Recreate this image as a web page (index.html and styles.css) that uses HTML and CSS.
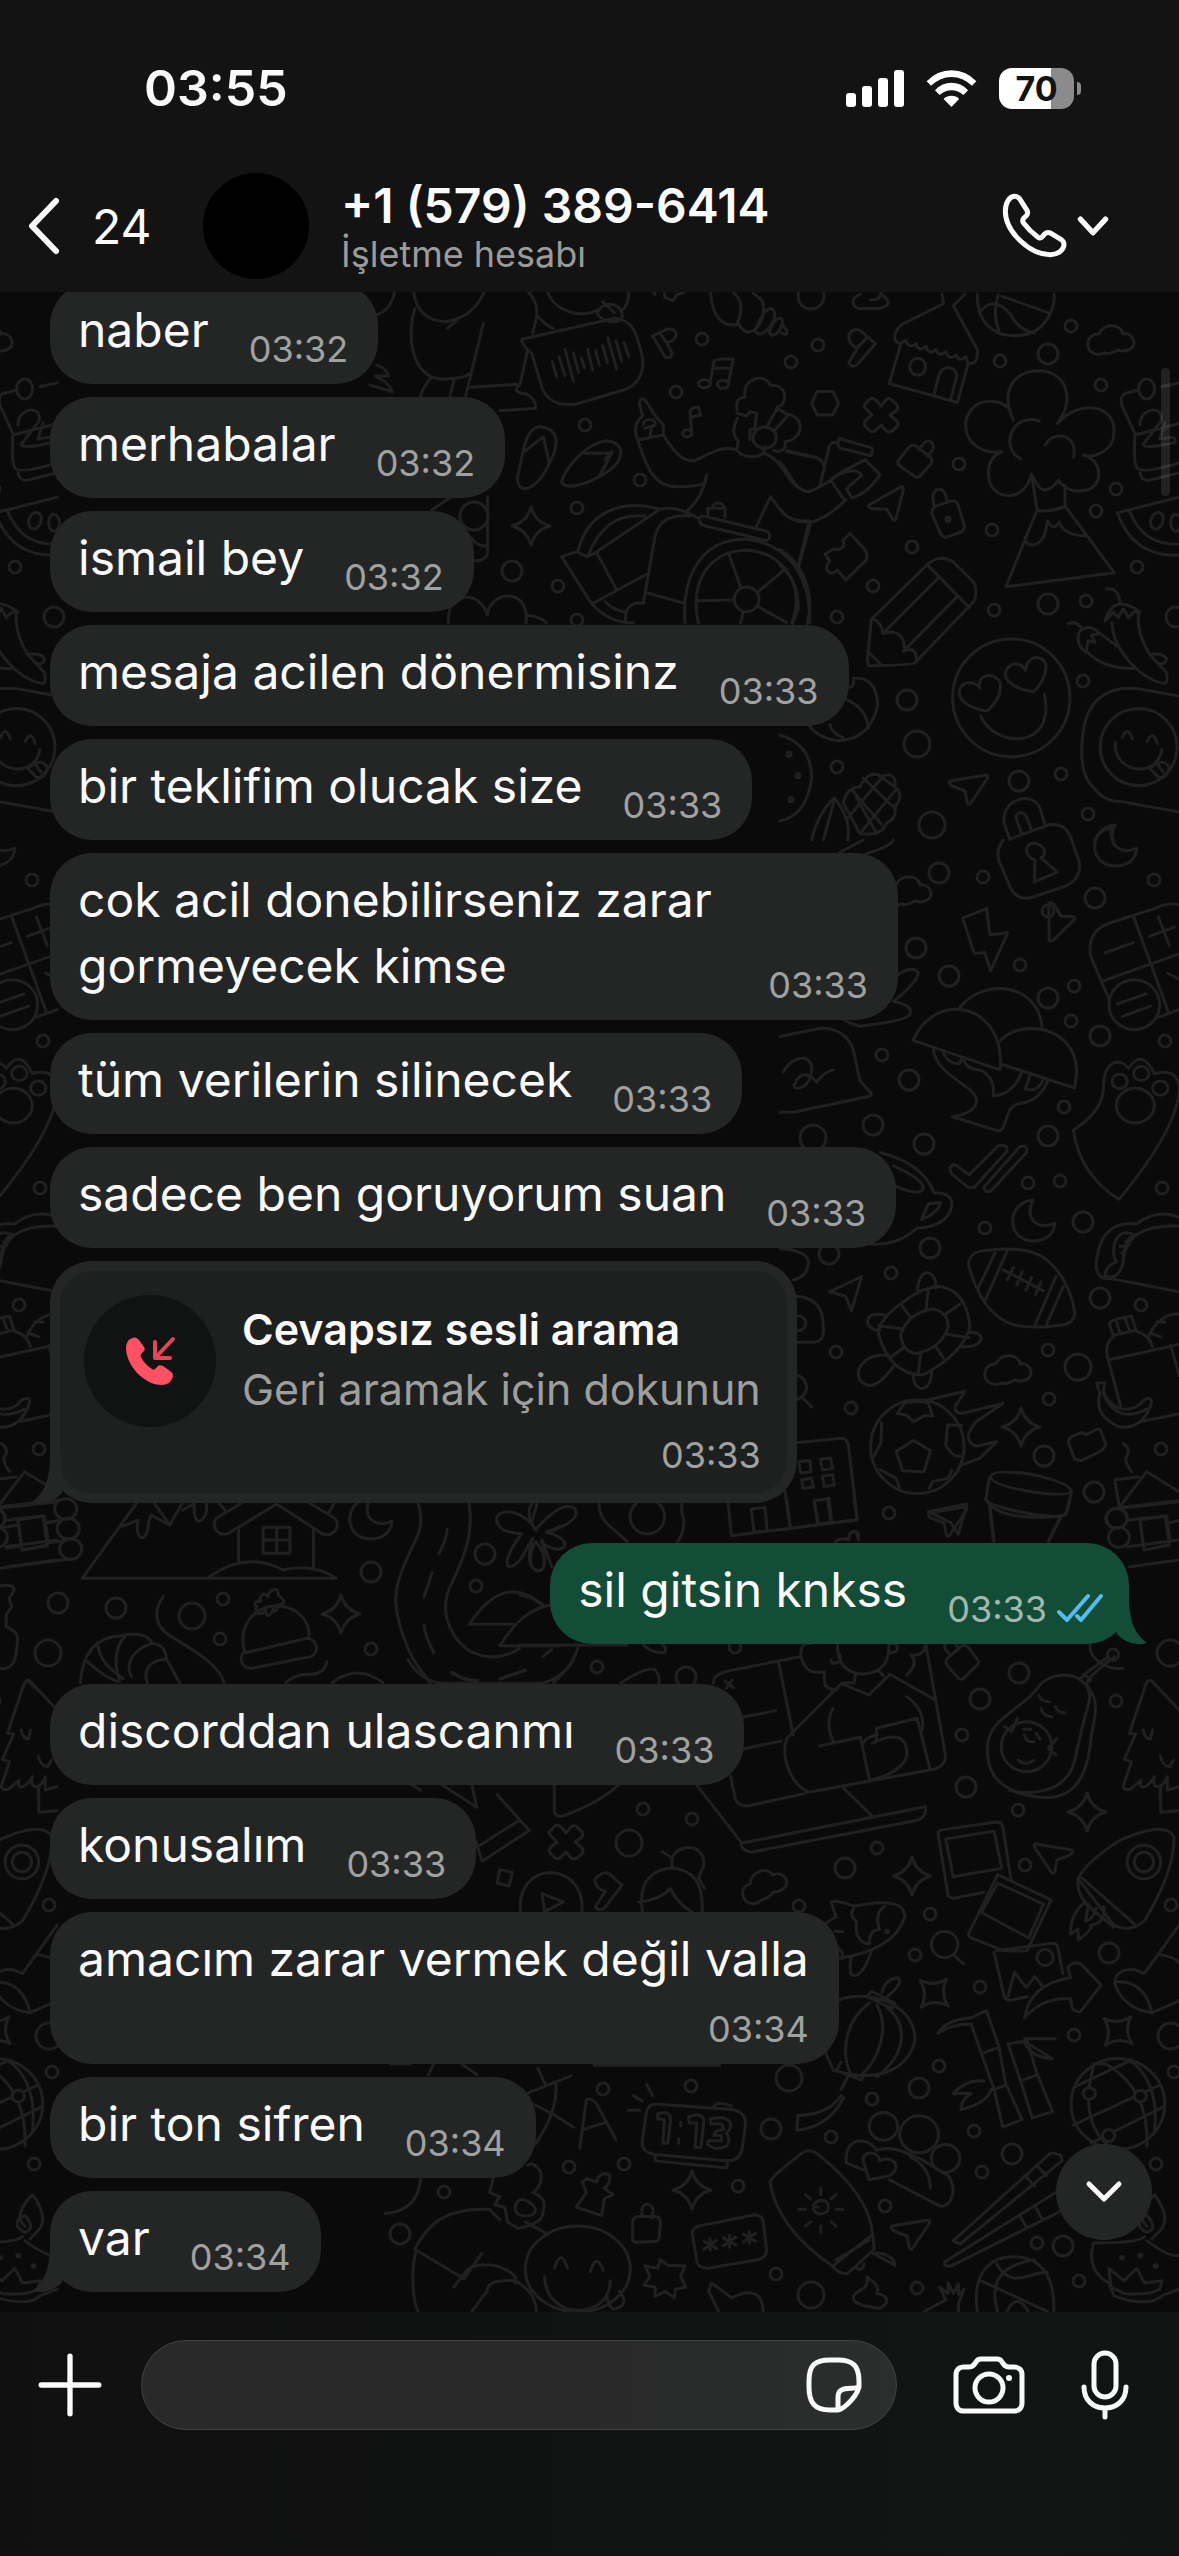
FILE: index.html
```html
<!DOCTYPE html>
<html lang="tr">
<head>
<meta charset="utf-8">
<meta name="viewport" content="width=device-width, initial-scale=1">
<title>+1 (579) 389-6414</title>
<link rel="stylesheet" href="styles.css">
</head>
<body>
<header class="top">
  <div class="status">
    <time class="clock">03:55</time>
    <div class="status-icons">
      <svg class="signal" viewBox="0 0 58 38" aria-hidden="true"><rect x="0" y="24" width="10" height="14" rx="3"/><rect x="16" y="17" width="10" height="21" rx="3"/><rect x="32" y="9" width="10" height="29" rx="3"/><rect x="48" y="1" width="10" height="37" rx="3"/></svg>
      <svg class="wifi" viewBox="438 84 154 116" aria-hidden="true"><path d="M440 120Q472 87 515 87T590 120L577 134Q549 107 515 107T453 134Z"/><path d="M465 147Q487 125 515 125T565 147L551 162Q535 147 515 147T479 162Z"/><path d="M491 174Q501 164 515 164T538 174L515 198Z"/></svg>
      <div class="battery"><span class="level">70</span></div>
    </div>
  </div>
  <div class="contact">
    <button class="back" type="button" aria-label="Geri">
      <svg class="back-icon" viewBox="0 0 36 60"><path d="M30 5 6 30 30 55"/></svg>
      <span>24</span>
    </button>
    <div class="avatar"></div>
    <div class="who">
      <h1>+1 (579) 389-6414</h1>
      <p>İşletme hesabı</p>
    </div>
    <button class="call" type="button" aria-label="Ara">
      <svg class="phone" viewBox="660 460 210 210"><path d="M705 476C688 476 676 495 676 521C676 582 750 652 812 651C835 650 852 637 852 620C852 614 849 610 844 606L813 587C805 583 799 584 794 589L787 597C783 602 778 602 773 598C757 586 743 572 730 555C727 550 727 547 731 542L739 534C744 529 744 524 741 518L722 488C718 481 713 476 705 476Z"/></svg>
      <svg class="down" viewBox="0 0 30 20"><path d="M3 3 15 16 27 3"/></svg>
    </button>
  </div>
</header>

<main class="chat">
  <svg class="wallpaper" viewBox="0 292 1179 2020" preserveAspectRatio="xMidYMin slice" aria-hidden="true">
    <defs>
      <circle id="s" r="6"/><circle id="m" r="10"/><circle id="l" r="13"/>
      <path id="star" d="M0-19Q4-4 19 0Q4 4 0 19Q-4 4-19 0Q-4-4 0-19Z"/>
      <path id="plane" d="M-19-6 17-12Q20-12 18-8L1 17Q-2 18-2 14L-4 4-17-1Q-21-4-19-6Z"/>
      <path id="cloud" d="M-18 12C-27 8-24-8-12-7C-8-18 10-18 12-7C24-9 27 7 17 9Q12 11 7 9Q-2 14-7 12Q-13 15-18 12Z"/>
      <path id="moon" d="M-1-20C-10 0 5 11 21 3C20 15 11 21-1 21C-29 20-27-18-1-20Z"/>
      <path id="cross" d="M-4-14 0-9 5-15Q8-18 11-15L16-10Q18-7 15-4L9 0 16 6Q18 9 16 12L11 16Q8 18 5 16L0 10-6 16Q-9 18-12 15L-16 11Q-18 8-15 5L-9 0-16-7Q-18-10-15-12L-11-16Q-8-18-4-14Z"/>
      <g id="bag"><path d="M-17 0-6-14Q-3-17 1-15L15-4Q18-1 16 3L6 14Q3 18-1 15L-15 5Q-18 3-17 0Z"/><path d="M4-12 9-18C15-24 22-15 16-9L12-5"/></g>
    </defs>
    <g id="doodles">
      <g>
        <use href="#l" x="811" y="296"/><use href="#m" x="1048" y="354"/><use href="#m" x="907" y="700"/><use href="#l" x="917" y="744"/><use href="#m" x="1019" y="781"/><use href="#l" x="932" y="825"/><use href="#m" x="1048" y="604"/><use href="#s" x="818" y="345"/><use href="#s" x="791" y="362"/><use href="#s" x="1071" y="326"/><use href="#s" x="1000" y="361"/><use href="#s" x="1101" y="385"/><use href="#s" x="959" y="464"/><use href="#s" x="1116" y="489"/><use href="#s" x="1096" y="511"/><use href="#s" x="992" y="530"/><use href="#s" x="912" y="547"/><use href="#s" x="1137" y="567"/><use href="#s" x="873" y="586"/><use href="#s" x="837" y="617"/><use href="#s" x="994" y="610"/><use href="#s" x="1086" y="601"/><use href="#s" x="1083" y="681"/><use href="#s" x="837" y="767"/><use href="#s" x="1061" y="774"/><use href="#s" x="1088" y="814"/><use href="#m" x="1176" y="617"/>
        <use href="#m" x="939" y="873"/><use href="#m" x="1095" y="898"/><use href="#m" x="916" y="948"/><use href="#m" x="949" y="976"/><use href="#m" x="1048" y="998"/><use href="#m" x="1100" y="1036"/><use href="#m" x="909" y="1080"/><use href="#m" x="873" y="1125"/><use href="#m" x="924" y="1144"/><use href="#m" x="1048" y="1136"/><use href="#m" x="1083" y="1222"/><use href="#m" x="930" y="1248"/><use href="#m" x="829" y="1254"/><use href="#m" x="1100" y="1298"/><use href="#l" x="1078" y="1367"/><use href="#m" x="1044" y="1456"/><use href="#m" x="1094" y="1492"/><use href="#l" x="813" y="1138"/>
        <use href="#s" x="983" y="877"/><use href="#s" x="1048" y="911"/><use href="#s" x="1154" y="880"/><use href="#s" x="1020" y="965"/><use href="#s" x="1074" y="986"/><use href="#s" x="1071" y="1021"/><use href="#s" x="1165" y="1041"/><use href="#s" x="882" y="1055"/><use href="#s" x="1064" y="1107"/><use href="#s" x="1028" y="1183"/><use href="#s" x="1060" y="1181"/><use href="#s" x="1162" y="1188"/><use href="#s" x="985" y="1228"/><use href="#s" x="891" y="1273"/><use href="#s" x="1141" y="1305"/><use href="#s" x="836" y="1352"/><use href="#s" x="1048" y="1350"/><use href="#s" x="1049" y="1399"/><use href="#s" x="851" y="1408"/><use href="#s" x="1161" y="1449"/><use href="#s" x="889" y="1513"/>
        <use href="#s" x="597" y="1667"/><use href="#s" x="735" y="1647"/><use href="#s" x="962" y="1735"/><use href="#s" x="1116" y="1701"/><use href="#m" x="686" y="1677"/><use href="#m" x="1019" y="1673"/><use href="#m" x="980" y="1699"/><use href="#m" x="966" y="1787"/><use href="#l" x="1170" y="1653"/>
        <use href="#s" x="643" y="1809"/><use href="#s" x="692" y="1819"/><use href="#s" x="1018" y="1810"/><use href="#s" x="877" y="1848"/><use href="#s" x="1025" y="1865"/><use href="#s" x="799" y="1906"/><use href="#s" x="930" y="1914"/><use href="#s" x="1171" y="1905"/><use href="#s" x="915" y="1955"/><use href="#s" x="980" y="1987"/><use href="#s" x="1074" y="2035"/><use href="#s" x="939" y="2066"/><use href="#s" x="1174" y="2072"/><use href="#s" x="603" y="2089"/><use href="#s" x="691" y="2086"/><use href="#s" x="872" y="2099"/><use href="#s" x="831" y="2137"/><use href="#s" x="974" y="2131"/><use href="#s" x="982" y="2172"/><use href="#s" x="569" y="2167"/><use href="#s" x="624" y="2164"/><use href="#s" x="738" y="2186"/><use href="#s" x="444" y="2192"/><use href="#s" x="885" y="2206"/><use href="#s" x="1037" y="2243"/><use href="#s" x="1079" y="2281"/><use href="#s" x="776" y="2274"/><use href="#s" x="917" y="2288"/><use href="#s" x="1156" y="2164"/>
        <use href="#m" x="845" y="1868"/><use href="#m" x="1109" y="1953"/><use href="#m" x="919" y="2088"/><use href="#m" x="771" y="2129"/><use href="#m" x="1012" y="2154"/><use href="#m" x="1063" y="2246"/><use href="#m" x="400" y="2234"/><use href="#l" x="629" y="1843"/><use href="#l" x="789" y="2078"/><use href="#l" x="811" y="2295"/><use href="#l" x="1171" y="2036"/>
        <use href="#s" x="702" y="339"/><use href="#s" x="676" y="392"/><use href="#s" x="585" y="425"/><use href="#s" x="640" y="480"/><use href="#s" x="577" y="508"/><use href="#s" x="558" y="586"/><use href="#s" x="577" y="620"/><use href="#m" x="512" y="571"/>
        <use href="#m" x="58" y="1603"/><use href="#m" x="116" y="1608"/><use href="#m" x="371" y="1572"/><use href="#m" x="485" y="1554"/><use href="#l" x="192" y="1616"/><use href="#s" x="223" y="1599"/><use href="#s" x="220" y="1639"/><use href="#s" x="371" y="1649"/><use href="#s" x="476" y="1586"/>
        <use href="#star" x="531" y="526"/><use href="#star" x="1021" y="1427"/><use href="#star" x="1087" y="1812"/><use href="#star" x="912" y="1876"/><use href="#star" x="692" y="2190"/><use href="#star" x="341" y="1614"/>
        <use href="#star" transform="translate(934 1993) rotate(42)"/><use href="#star" transform="translate(1118 2031) rotate(42)"/>
        <use href="#plane" x="969" y="787"/><use href="#plane" transform="translate(889 504) rotate(-20)"/><use href="#plane" transform="translate(1058 921) rotate(-100) scale(-1 1)"/><use href="#plane" x="948" y="1519"/><use href="#plane" transform="translate(1053 1856) scale(-1 1)"/><use href="#plane" x="911" y="2232"/>
        <use href="#cloud" x="1111" y="341"/><use href="#cloud" x="1008" y="1371"/><use href="#cloud" x="908" y="892"/><use href="#cloud" transform="translate(764 1886) rotate(-20)"/>
        <use href="#moon" x="1034" y="1220"/><use href="#moon" x="1116" y="845"/><use href="#moon" x="371" y="1518"/>
        <use href="#cross" x="881" y="415"/><use href="#cross" x="566" y="1842"/>
        <use href="#bag" x="915" y="461"/><use href="#bag" transform="translate(962 1662) rotate(-80)"/><use href="#bag" transform="translate(646 2229) rotate(-38)"/>
      </g>
      <g transform="translate(780 280) scale(.3333 .3571)">
        <path d="M219 62Q218 48 240 40M305 40Q336 62 318 73Q300 80 290 80H245Q222 82 219 62M272 55Q300 58 302 38"/>
        <path d="M486 40 491 66 365 125Q340 145 345 165Q352 187 378 168Q385 195 408 178Q417 205 438 185Q446 212 468 195Q477 218 498 200Q508 228 528 210Q540 232 557 215L565 233Q595 240 592 195L520 72 555 40M362 180 328 290 532 343 565 232M462 322 477 265C495 232 530 245 530 270L512 335"/>
        <circle cx="413" cy="243" r="24"/><path d="M592 40Q590 130 670 153Q780 170 815 85Q825 62 822 40M655 42Q635 95 660 150M598 92Q640 40 690 95Q720 145 765 148M665 45 808 93"/>
        <path d="M206 155Q215 133 240 141L287 178 230 238Q215 247 206 232L232 192Q205 180 206 155M262 160 230 192M112 312 95 345 112 378H158L176 345 158 312Z"/>
        <path d="M700 393C660 310 700 255 778 254C855 255 890 330 832 402C900 330 1010 350 1002 430C1000 480 940 500 910 490C975 505 970 590 905 590Q875 595 850 575Q838 570 836 560Q795 610 770 570L754 544C735 620 650 620 628 565Q615 500 665 481C600 490 550 450 558 395C570 330 660 325 692 365M778 395C700 370 655 465 722 501M796 462C820 420 895 430 881 496M754 544 772 646Q810 650 855 635V575M770 646 678 859 1003 820 857 635M735 720C735 750 780 750 795 710L803 675Q820 705 838 678Q850 715 920 717"/>
        <path d="M1146 298 1198 288M1076 308 1035 318Q1020 325 1025 350L1065 430Q1060 510 1070 525 1080 545 1198 512M1080 540Q1085 565 1110 560L1198 540M1065 434 1198 402M1080 405C1080 355 1155 350 1143 395L1090 460Q1090 475 1185 455Q1188 440 1175 440L1140 445 1155 400"/><ellipse cx="1100" cy="305" rx="24" ry="28"/>
        <path d="M1198 608 1012 652C1050 750 1120 775 1198 770M1047 645C1080 715 1120 740 1198 740"/><ellipse cx="1131" cy="674" rx="18" ry="24" transform="rotate(25 1131 674)"/><ellipse cx="1188" cy="680" rx="16" ry="24"/>
        <path d="M0 510C30 540 45 590 85 592Q120 585 190 535L255 503 300 545Q260 600 215 610L200 585Q215 570 245 548Q235 530 210 535Q165 545 152 560L190 612M0 640Q30 685 100 677Q150 660 198 615M120 575 148 465Q155 453 172 455M20 478 110 497Q135 510 133 530M178 444 275 470Q282 475 272 492L180 470Q168 465 178 444M92 680 57 800"/>
        <path d="M472 632 515 618Q530 617 535 632L553 688Q553 703 540 707L500 720Q487 722 480 707L456 655Q453 640 472 632M462 632 458 605C465 580 490 580 498 605L503 622"/><circle cx="504" cy="670" r="6"/>
        <path d="M210 710 255 755Q265 770 258 785L197 840 172 812C150 835 125 805 150 788L135 768 160 753C180 760 200 745 188 730Z"/>
        <path d="M442 797Q480 765 520 790L580 845Q595 870 582 900L405 1072Q400 1078 265 1080L262 1065 274 950ZM442 797 568 918M472 837 308 990M530 888 370 1040M278 948Q308 960 308 990 370 970 375 1037 410 1025 410 1068M263 1040 305 1078"/>
        <ellipse cx="694" cy="1170" rx="176" ry="165"/><path d="M599 1143C590 1105 640 1095 660 1125C668 1165 640 1190 622 1207C560 1200 530 1170 540 1145C550 1120 590 1125 599 1143M737 1093C740 1050 790 1045 798 1080C800 1110 780 1135 762 1153C690 1145 665 1110 680 1090C700 1065 725 1075 737 1093M602 1220C640 1310 830 1320 793 1160"/>
        <path d="M980 865Q1015 860 1020 905M975 955Q1000 875 1080 930L1062 930 1045 945 1030 920 1015 945 1000 930ZM996 960C1000 1040 1090 1125 1155 1130Q1165 1125 1160 1100L1110 1050Q1070 990 1075 935M1110 1048Q1155 1045 1160 1062Q1155 1080 1135 1073M865 962Q890 955 905 975M918 1043Q885 1020 898 985Q925 960 960 990L935 995 945 1015 925 1010ZM920 1040Q970 1090 1065 1088M960 990 1015 1028"/>
        <path d="M1198 1165 1080 1145Q940 1130 912 1250 890 1380 940 1420 970 1460 1020 1460L1198 1490"/><ellipse cx="1076" cy="1308" rx="115" ry="108"/><path d="M1006 1295C1000 1380 1130 1400 1146 1315M1027 1282Q1043 1245 1057 1285M1102 1292Q1118 1258 1132 1298M1110 1368Q1150 1335 1168 1365 1160 1400 1135 1392ZM1128 1350 1150 1378"/>
        <path d="M0 755Q90 810 90 920L82 962M0 800Q55 840 55 920L38 962M0 820 18 808M200 1140Q225 1145 220 1115Q290 1110 293 1190Q270 1290 170 1290Q110 1280 85 1245M200 1175Q260 1200 265 1255M150 1245Q155 1270 190 1282"/>
        <path d="M0 1275Q95 1300 95 1395Q80 1500 0 1515"/><circle cx="27" cy="1328" r="6"/><circle cx="54" cy="1388" r="6"/><circle cx="33" cy="1455" r="6"/>
        <path d="M95 1568Q110 1500 162 1450Q215 1510 203 1568M130 1568 162 1460M190 1465Q200 1420 240 1420 265 1370 305 1390 350 1375 345 1420 375 1440 345 1475 350 1510 320 1520 305 1560 240 1550M190 1465 240 1550M218 1430 305 1525M250 1395 345 1480M300 1390 345 1420M200 1510 300 1400M240 1550 345 1430M230 1450 290 1550"/>
        <path d="M690 1568 672 1520C665 1450 760 1430 780 1480L795 1525M724 1550 708 1505C710 1485 735 1490 740 1505L755 1540M690 1565 810 1525Q860 1520 875 1568M945 1568Q960 1535 998 1535Q985 1550 1000 1568"/>
      </g>
      <g transform="translate(780 840) scale(.3333 .4464)">
        <path d="M670 0Q640 30 665 60L690 105Q710 135 750 130L850 105Q905 90 898 50L875 0M763 94 765 45C720 30 745 0 770 8C800 15 798 35 783 40L832 72ZM180 27 250 0M260 30Q330 15 340 0"/>
        <path d="M548 175 620 153 630 213 683 208 632 293 614 252 583 254Z"/>
        <path d="M1198 145Q1160 140 1130 152L985 187Q920 205 932 260L988 358M1060 170 1165 385M965 317 1198 255M1135 397 1198 380M975 253 1060 230M1108 216 1183 195M1135 172 1168 236M1012 367 1098 345M1027 395 1112 372M1163 298 1198 312"/><ellipse cx="1063" cy="369" rx="76" ry="56"/>
        <path d="M399 449C470 330 680 370 660 515ZM537 378C610 305 780 320 787 425M660 450C720 400 890 415 890 520L884 556 668 503M460 470C470 530 590 550 590 585Q585 612 517 620L655 652C685 650 670 595 720 590Q780 585 803 540M550 490Q560 515 600 515 645 530 640 573 700 570 725 520M490 478Q510 505 540 500L545 488M752 525 735 558Q775 565 790 537"/>
        <path d="M880 650Q965 610 970 560 970 500 1015 497 1035 500 1045 512 1085 465 1123 523 1198 510 1198 560 1190 650 1017 805 900 750 880 650"/><ellipse cx="1019" cy="541" rx="23" ry="16"/><ellipse cx="1084" cy="523" rx="23" ry="16"/><ellipse cx="1141" cy="556" rx="23" ry="16"/><ellipse cx="1066" cy="595" rx="57" ry="39"/>
        <path d="M0 440 120 422Q195 420 220 470L240 540 274 567Q275 573 262 575L40 610H0M10 520C40 475 110 480 93 525C80 565 30 560 45 545C60 520 85 520 110 543Q130 520 160 515M330 315Q395 275 415 298 410 320 340 362Q400 370 390 390 380 405 240 417 210 412 185 400"/>
        <path d="M509 735Q520 720 540 735L567 750 655 685Q685 680 681 697L583 778Q565 782 555 772L515 748ZM612 778 718 688Q745 680 740 700L632 787Q612 790 612 778"/>
        <path d="M565 950Q570 925 600 921 740 905 800 940 870 985 885 1060 880 1085 840 1087 730 1098 680 1080 600 1050 565 950M645 925 595 1003M682 920 615 1032M828 978 765 1087M850 1000 800 1085M670 963 790 1010M700 958 682 985M727 967 710 997M755 980 738 1008M783 990 767 1018"/>
        <path d="M300 700Q430 725 462 790 520 790 515 820 505 865 410 870 350 910 270 905M340 730Q430 760 430 780 420 800 345 775M425 850 445 815 482 812Q475 835 425 850M0 915Q90 920 85 950 80 980 40 985M48 1022Q130 1025 130 1090 135 1125 100 1125H48M48 1065Q75 1065 78 1082 75 1100 48 1100M48 1198Q80 1205 80 1230 70 1250 48 1255M68 1250 95 1270"/>
        <path d="M148 1012 245 978 214 1055 197 1022Z"/>
        <path d="M295 1105Q300 1070 370 1035 430 1000 480 1000 560 1010 570 1090 550 1150 430 1198 330 1200 295 1105M362 1110Q380 1060 460 1050 510 1060 503 1095 480 1140 410 1150 370 1150 362 1110M445 1008 438 1052M540 1040 495 1063M567 1115 502 1107M490 1160 465 1132M415 1195 422 1150M330 1160 370 1138M297 1088 365 1095M367 1045 395 1072M413 1008C415 955 470 960 468 1003M318 1065C245 1050 250 1100 300 1098M570 1103C620 1100 615 1140 545 1135M340 1180Q300 1220 270 1222 225 1215 237 1185 260 1150 325 1155M400 1198C400 1240 455 1240 455 1190"/>
        <ellipse cx="412" cy="1359" rx="140" ry="105"/><path d="M348 1370 400 1345 452 1368 432 1415 368 1413ZM352 1285 375 1260Q430 1255 445 1262L458 1290 432 1290 402 1303 378 1288ZM305 1305 303 1350 283 1380M545 1312 503 1310 497 1355Q520 1385 540 1380M300 1410 348 1430 358 1450M515 1412 505 1430 458 1437 448 1452M440 1255 555 1235 525 1270Q525 1290 560 1282L670 1262 590 1302Q540 1345 590 1358L650 1348 600 1385 545 1400"/>
        <path d="M948 960Q955 850 1070 860 1130 825 1198 845M1030 940Q1040 860 1198 865M950 960Q955 985 990 982L1198 1012M1030 945C1030 885 1070 880 1065 885 1000 860 990 930 1010 945Q975 955 975 975 1015 990 1030 945M1020 910H1035M1025 925H1035M1037 900 1047 908"/>
        <path d="M988 1085Q990 1073 1055 1067L1068 1098 1000 1110ZM1010 1080 1020 1105M1035 1072 1050 1100M1000 1112Q970 1130 985 1165L1022 1268M985 1165 1198 1130M1068 1100Q1110 1110 1117 1135M1107 1110Q1140 1060 1198 1062M1130 1080H1155M1112 1105 1143 1113M1088 1302 1198 1285M1172 1132 1198 1200M950 1217 975 1216 970 1235C1000 1290 1070 1280 1090 1255Q1115 1245 1115 1260 1090 1320 1020 1315 940 1290 960 1240ZM970 1240Q1010 1310 1100 1275"/>
        <path d="M865 1350Q865 1338 880 1335L905 1327 918 1332 950 1320Q962 1318 965 1328L978 1355 965 1368 905 1390 885 1388ZM1030 1352Q1055 1365 1040 1380 1030 1390 1055 1415"/>
        <path d="M632 1425Q640 1410 750 1420 870 1440 873 1458 870 1472 755 1460 630 1445 632 1425M628 1430 617 1478Q625 1490 720 1505 850 1525 860 1505L875 1460M628 1490 640 1568M842 1518 808 1568M48 1350 185 1340Q200 1340 205 1355L232 1522 0 1545M15 1460 30 1540M57 1393 90 1390 93 1415 62 1418ZM122 1387 152 1385 158 1408 127 1411ZM65 1433 95 1430 100 1450 68 1452ZM127 1425 158 1422 163 1445 133 1448ZM115 1530 102 1480 147 1475 155 1528M205 1568Q205 1545 235 1552V1568"/>
        <path d="M1005 1433 1075 1427M1005 1435 1018 1495 1100 1415 1198 1460M1018 1495 1198 1480M1040 1525 1080 1520 1160 1515 1170 1568M1080 1522 1088 1568M1165 1530 1198 1525"/><ellipse cx="1009" cy="1520" rx="32" ry="22"/>
      </g>
      <g transform="translate(520 1500) scale(.4203 .3333)">
        <path d="M38 92C0 20 40 0 40 0M65 98Q150 60 130 25 100 0 40 85M65 98C140 120 100 180 50 125M38 125C70 180 60 215 40 212 15 200 25 150 38 125M188 0Q185 50 215 80L255 125M388 0Q380 30 390 60 390 100 375 125M495 8 503 107 802 60 795 0M635 0 643 82M550 27 583 22 588 92 557 97ZM700 0 708 72 740 67 732 0M750 125Q765 110 783 120 780 90 800 95L805 118"/><ellipse cx="303" cy="50" rx="41" ry="52"/>
        <path d="M972 35 1063 12 1043 103 1025 68ZM1110 0Q1130 50 1230 52 1270 52 1298 45L1308 0M1118 15 1128 125M1285 52 1257 125"/>
        <ellipse cx="1420" cy="55" rx="25" ry="30"/><ellipse cx="1425" cy="112" rx="25" ry="30"/><path d="M1430 25 1568 5M1445 140 1568 120M1475 60 1535 48 1545 135 1485 150ZM1450 200 1568 180"/>
        <path d="M0 435H255M0 285Q30 290 55 318M140 437Q125 500 80 548M240 548Q300 500 320 508 335 530 330 548M290 430Q310 460 345 458 350 440 335 430M460 548Q460 520 500 512L668 470M615 485 650 705M965 430 1013 770Q1010 800 985 808L680 878M528 652 608 632M528 748 622 723M487 543 508 563M505 540 490 566M668 470C665 415 700 435 690 430M668 470C680 520 700 520 725 515 720 560 730 570 755 568M755 430Q755 520 815 522 880 520 878 430M740 480C740 500 765 490 762 465M878 430Q905 430 895 455L875 460M920 525Q950 490 930 465 960 470 965 435M798 523 795 548 765 550 635 715C620 760 640 850 685 875M765 552 830 585 880 523 988 600M855 515 865 528M920 590Q965 630 957 690M745 625Q725 670 745 722M712 738 810 712 832 845M848 720V685L945 655 975 805M838 730C880 700 925 700 920 770 900 840 800 850 680 878M815 735Q820 710 850 705"/>
        <path d="M1112 750C1110 650 1200 630 1240 550 1290 500 1360 530 1355 600 1340 670 1330 720 1320 780 1300 890 1200 880 1180 875 1130 850 1112 810 1112 750M1345 550C1380 600 1370 640 1360 700 1355 780 1340 895 1250 893 1200 890 1180 875 1165 870M1330 538 1345 525 1358 540 1345 552ZM1340 525 1400 470M1350 540Q1390 490 1415 470M1357 430C1350 480 1400 510 1435 505 1480 500 1475 430"/><ellipse cx="1205" cy="740" rx="60" ry="75"/><ellipse cx="1411" cy="464" rx="13" ry="17"/><path d="M1235 588Q1240 605 1260 605M1240 625Q1245 650 1265 650M1273 620Q1280 640 1297 638M1197 688H1215M1200 705Q1205 730 1222 725M1228 700 1238 718M1185 780Q1205 800 1222 780M1153 680 1170 695 1183 655M1278 715 1257 745 1275 765"/>
        <path d="M1568 630 1505 545Q1497 535 1490 550L1450 700 1465 702 1438 778 1455 785 1435 860Q1440 875 1455 865L1478 840C1470 870 1490 870 1510 830 1500 870 1530 870 1540 830V870L1568 860M1483 690Q1485 715 1500 717L1505 690M1523 768Q1530 800 1545 800L1555 780M1523 865V898"/>
      </g>
      <g transform="translate(380 1660) scale(.5096 .4209)">
        <path d="M55 0Q80 50 120 55H320Q360 40 380 0M140 30Q165 50 192 48M235 45 285 25M60 295 80 310M120 295 190 350 180 295M230 320 293 405 200 478 188 430M275 380 190 445M342 295V360Q345 375 360 370 430 340 470 295M620 295 710 435 1065 350M708 435Q710 455 730 456L1050 382Q1075 375 1070 348M910 305 965 370M688 275 697 330Q705 350 725 346L830 318"/>
        <path d="M235 498 260 505 253 537 230 530ZM276 600C270 540 300 505 337 505 380 510 400 550 396 600M318 555 360 575 323 598ZM422 520Q440 500 450 508L475 535 440 590Q425 597 423 585L442 550Q420 540 422 520M515 598C505 520 540 495 575 495 620 500 635 540 632 598M508 575Q550 570 570 543 585 580 612 598M553 455 573 470V495M573 470C590 430 640 440 635 490Q630 500 625 518L637 543"/>
        <path d="M1532 300V362L1568 358M1370 520Q1385 480 1450 430 1540 380 1558 420 1560 500 1500 620 1470 650 1440 630ZM1370 520Q1365 560 1400 595L1440 635M1378 518 1480 627M1385 575Q1355 600 1355 650L1370 640V665Q1400 640 1395 630 1425 625 1420 585M1390 580 1385 620Q1400 615 1405 590"/><ellipse cx="1499" cy="480" rx="33" ry="40"/><ellipse cx="1499" cy="480" rx="19" ry="23"/>
        <path d="M1095 412Q1095 405 1105 403L1210 385Q1220 385 1222 395L1238 520M1095 412 1115 560Q1120 568 1130 565L1185 552M1110 425 1205 407 1220 495 1125 515ZM1212 510 1317 570 1270 690Q1265 693 1222 690L1160 660Q1153 655 1155 650ZM1212 530 1302 580 1273 660 1180 600ZM1210 690 1320 673Q1328 673 1330 682L1340 745M1205 695 1225 800Q1228 810 1240 808L1270 800M1232 800 1245 742 1268 778 1285 752 1300 775M1265 850Q1275 770 1355 755L1350 730Q1360 715 1375 722L1415 772 1375 835Q1362 838 1358 825L1355 805Q1300 800 1265 850"/><ellipse cx="1305" cy="707" rx="16" ry="19"/><ellipse cx="1108" cy="676" rx="26" ry="31"/><path d="M1125 700 1145 722"/>
        <path d="M885 575Q900 570 930 585 1030 560 1030 610 1010 690 895 710M885 575 895 610 875 625M930 590Q920 610 935 620 930 670 960 675 960 640 980 640 970 600 990 585M893 645H908M965 690Q945 760 925 748 920 735 925 705M893 680Q910 690 908 710"/><circle cx="995" cy="645" r="3"/>
        <path d="M890 815C930 780 1050 800 1050 905 1030 990 960 1000 890 975L875 935M955 800 965 787 1010 815 1005 828ZM985 790Q990 760 1015 755 1030 765 995 800M960 815C900 870 910 960 925 985M975 820C1000 870 980 950 945 985M995 825C1040 870 1030 940 975 990M905 955 895 975 945 998 950 982M918 990 905 1020M905 1035Q880 1080 820 1082L818 1117Q880 1110 910 1040"/>
        <path d="M1095 887Q1110 855 1160 850L1190 833 1215 920 1180 935 1160 865Q1120 865 1095 887M1180 935 1205 1020 1228 1010 1215 920M1205 1020 1222 1110 1260 1092 1230 1012M1125 1030Q1150 995 1185 1000M1125 1030H1160Q1140 1045 1140 1068 1190 1055 1200 1020M1232 912 1270 905 1290 985 1257 1000ZM1257 1000 1280 1088 1320 1073 1290 985M1265 900H1325M1270 910 1320 948Q1280 945 1265 910"/>
        <path d="M1568 630 1500 745 1480 735Q1440 735 1442 770 1460 830 1515 838L1568 810M1442 765Q1500 760 1515 838M1530 700Q1560 705 1568 720"/>
        <ellipse cx="1448" cy="1055" rx="92" ry="108"/><path d="M1400 965Q1370 1100 1435 1160M1400 960 1425 960Q1510 1020 1505 1155M1362 1015 1475 950M1360 1105 1530 1010M1395 1148 1540 1060M1470 950Q1530 1000 1520 1120"/><ellipse cx="1392" cy="1030" rx="12" ry="14" class="solid"/><ellipse cx="1492" cy="1036" rx="12" ry="14" class="solid"/><ellipse cx="1430" cy="1130" rx="12" ry="14" class="solid"/>
        <path d="M420 963H667M95 985 105 960M160 960 190 985M20 960H60M310 970 325 1010M287 1030 375 988M345 1005Q350 1070 305 1150M300 1055Q330 1070 380 1110M392 1160 405 1045Q415 1040 425 1055L463 1140M400 1115 440 1100M497 1035 515 1048M523 1008 535 1035M487 1070H510"/>
        <path d="M540 1055 690 1068Q720 1075 717 1105L710 1165Q705 1190 680 1190L540 1175Q510 1170 515 1140L522 1080Q525 1055 540 1055M655 1062Q660 1045 690 1060M540 1178V1190L680 1207 683 1192M545 1078 560 1075Q572 1080 570 1095L565 1148H555L558 1092 545 1090ZM605 1085 622 1080Q638 1085 635 1100L630 1158H618L622 1100H607ZM648 1090Q690 1080 688 1110L680 1125Q690 1140 680 1155 660 1168 642 1150L645 1142H670V1130H655L658 1120 675 1115 670 1102H650ZM590 1098V1108M586 1138V1148"/>
        <path d="M765 1240Q770 1225 830 1170 845 1160 860 1175 960 1270 967 1365L888 1440Q780 1350 765 1240M888 1440Q900 1460 918 1457L970 1400 967 1365M895 1425 960 1378M965 1408 1010 1438Q1010 1415 975 1408M935 1445Q945 1455 950 1435M850 1305Q860 1325 878 1310 885 1280 860 1285 840 1300 860 1300M865 1255V1270M865 1345V1360M822 1305H835M895 1305H908M835 1270 845 1280M895 1270 885 1280M835 1345 845 1335M895 1345 885 1335"/>
        <path d="M915 1195C910 1140 950 1125 975 1165 1000 1150 1040 1175 1060 1185L1115 1225C1135 1260 1120 1300 1100 1298L1000 1235M960 1235 948 1190C945 1165 980 1165 980 1190 1000 1175 1030 1200 1000 1225ZM915 1195 950 1212M1040 1180Q1080 1205 1080 1255"/><ellipse cx="988" cy="1108" rx="28" ry="33"/><ellipse cx="1058" cy="1127" rx="38" ry="44"/><ellipse cx="1110" cy="1184" rx="28" ry="33"/>
        <path d="M1125 1380 1315 1172Q1340 1170 1338 1190L1138 1388ZM1108 1430 1330 1262M1108 1430Q1105 1442 1120 1440L1335 1310M1265 1225 1285 1250M1288 1200 1308 1225M1255 1320 1270 1350M1285 1297 1300 1330"/>
        <path d="M625 1345 735 1318Q750 1320 752 1335L759 1405Q755 1422 740 1425L645 1445Q625 1445 622 1430L613 1365Q612 1350 625 1345M648 1375V1403M636 1381 660 1398M660 1379 636 1400M686 1367V1395M674 1373 698 1390M698 1371 674 1392M725 1358V1386M713 1364 737 1381M737 1362 713 1383"/>
        <ellipse cx="388" cy="1447" rx="103" ry="102"/><path d="M323 1465C325 1570 450 1570 452 1475M342 1445Q355 1395 368 1445M413 1453Q425 1405 438 1450M445 1510Q450 1550 465 1540 490 1530 470 1500M80 1230Q75 1310 10 1315M222 1232 215 1265 235 1275 225 1295 245 1300 250 1335 270 1350Q320 1340 320 1310 330 1280 300 1265 320 1250 315 1215 300 1190 290 1200M265 1300Q270 1270 295 1290 315 1310 295 1320 265 1325 265 1300M215 1305C120 1300 90 1350 68 1400L165 1470 200 1410M70 1410C60 1450 65 1530 75 1548M145 1490 170 1450Q190 1430 230 1440 275 1460 265 1480M265 1475Q210 1470 210 1500L180 1548M265 1475Q305 1500 307 1548M215 1305 235 1330M285 1335 330 1365M425 1240Q430 1215 450 1222 455 1240 440 1255L457 1270 440 1280 435 1320 385 1300 405 1265 397 1240 405 1232Z"/>
        <path d="M520 1440 545 1445 550 1425 565 1438 598 1440 590 1465 600 1490 580 1495 577 1515 560 1500 540 1512V1490L518 1485 530 1465ZM650 1480 645 1500 665 1548M650 1480 690 1515Q750 1480 752 1548M930 1510C940 1490 960 1500 955 1465 985 1490 975 1500 975 1505 1000 1510 1000 1530 980 1540 940 1535 925 1525 930 1510M1068 1548 1110 1520 1098 1490 1115 1505V1480L1125 1505 1135 1482V1508L1146 1495 1135 1530V1548"/>
        <path d="M1172 1548C1160 1440 1210 1415 1247 1418 1300 1420 1325 1470 1322 1548M1210 1435C1240 1500 1280 1450 1310 1455M1285 1425C1200 1440 1200 1500 1212 1548M1180 1475 1310 1548M1272 1548Q1250 1500 1230 1548"/>
        <path d="M1505 1345Q1480 1320 1520 1270 1550 1320 1535 1350L1515 1375M1505 1360C1480 1345 1490 1325 1505 1320 1520 1340 1520 1355 1505 1360M1500 1370Q1490 1385 1400 1385 1385 1450 1430 1480L1440 1510C1480 1530 1520 1530 1535 1510L1568 1495M1505 1380Q1550 1420 1568 1415M1435 1490 1430 1445 1460 1475 1485 1445 1500 1480 1535 1475 1530 1495Q1510 1510 1460 1505Z"/><circle cx="1456" cy="1420" r="3"/><circle cx="1492" cy="1415" r="3"/><circle cx="1522" cy="1440" r="3"/>
      </g>
      <g transform="translate(370 290) scale(.3333)">
        <path d="M75 0Q65 60 18 75M130 0Q140 90 225 95 310 85 345 0M135 55C110 130 120 260 215 268 260 265 280 265 302 250M232 115 262 90M340 100 287 318M182 265Q160 290 152 318M252 270 240 318M470 0Q510 40 498 90L488 130M302 292 440 283M472 185 450 283C430 300 440 310 470 312Q500 330 497 355L390 362M505 80Q525 105 550 115M530 0C560 80 650 80 683 60M777 0Q775 50 757 60M455 148 735 85C790 90 800 130 817 200 825 250 800 290 760 300L620 342C560 350 530 330 515 290L485 190Q455 165 455 148M680 68C710 20 760 50 757 80 740 110 690 90 680 68M698 35 733 68"/>
        <path d="M547 215 560 260M567 200 585 257M585 178 610 273M610 188 626 248M634 205 644 233M653 178 668 240M677 182 688 225M698 167 713 220M713 143 740 237M738 152 755 213M762 157 777 200"/>
        <path d="M20 225Q50 235 55 258H15M15 258Q60 280 67 305L0 285M458 490C470 430 490 410 510 410 570 415 570 470 530 535 500 600 440 620 443 560ZM460 487 520 440 537 515M580 560C590 540 640 460 710 452 770 460 760 510 720 540 650 590 580 600 575 575ZM640 490H725L690 555M725 485 705 510"/>
        <path d="M848 138 890 118C930 110 925 155 890 158L907 190Q900 210 885 200ZM868 128 890 158M845 0 855 12M883 10 885 22 910 32 918 15 940 8M1022 10Q1030 110 1100 105 1130 40 1090 8M1105 100C1140 170 1200 80 1175 30L1150 10M1155 120C1170 160 1230 90 1210 60Q1190 40 1155 120M1198 125C1210 160 1250 100 1233 85Q1215 80 1198 125M1235 130Q1255 140 1250 120L1238 105"/>
        <path d="M1020 280 1032 215Q1035 205 1090 208L1075 280M1030 235H1085"/><ellipse cx="1003" cy="281" rx="18" ry="12"/><ellipse cx="1059" cy="283" rx="17" ry="12"/><path d="M965 425 960 365Q965 352 985 352L992 375 962 382"/><ellipse cx="952" cy="430" rx="14" ry="11"/>
        <path d="M803 450 880 435V405L858 380 825 330Q810 320 808 340L818 378C790 400 795 430 803 450M820 405Q820 385 850 390 865 405 845 410L840 435M825 415 855 405M803 450C830 530 850 590 920 590Q980 590 1000 580M880 435C910 480 930 515 975 512 1020 490 1060 465 1100 480M1010 555Q1000 620 950 665M1102 360C1090 320 1130 320 1125 320 1115 260 1190 250 1200 285 1260 285 1250 350 1222 350M1102 370 1130 378 1140 365 1160 370 1155 415 1140 420V450M1102 385Q1085 420 1095 440L1105 455 1100 480C1120 505 1160 505 1180 490L1185 470M1193 405 1222 355 1255 375 1215 420M1250 372C1310 380 1300 450 1245 455 1250 480 1230 490 1210 480M1180 490C1250 510 1250 600 1320 605M1250 485 1320 500M1160 708 1202 620C1230 660 1250 700 1320 692M1315 705 1287 820"/><ellipse cx="1184" cy="443" rx="35" ry="32"/>
        <path d="M625 780C650 680 740 620 870 658M655 795C690 710 740 670 825 678M680 785 870 658Q920 645 985 685M575 800 620 785 650 800 680 788 740 900M575 800 665 942 835 850M855 740Q870 670 960 678M855 740 820 940C780 935 760 960 768 998M665 942Q720 1000 790 998M705 935Q735 965 770 965M830 908 942 940M985 685 1000 678 1195 725Q1205 745 1190 752L995 705ZM1015 675 1012 655H1065V682M1028 652C1030 635 1060 635 1062 652M945 998C935 850 1000 745 1130 748 1250 760 1320 850 1320 998M985 998C960 880 1010 785 1130 780 1240 785 1310 890 1265 998M1078 795 1112 892M1165 905 1245 838M1165 950 1250 998M1120 965 1112 998M980 932 1092 930"/><circle cx="1130" cy="928" r="37"/>
        <path d="M235 998C230 900 330 900 352 975 360 900 480 890 468 998M470 975Q510 980 530 998M353 620V790Q345 815 315 812M185 660 245 620M305 745Q320 770 353 768"/><ellipse cx="312" cy="678" rx="42" ry="42"/>
      </g>
      <g transform="translate(0 1490) scale(.3571 .3333)">
        <path d="M0 50 165 30M0 235 190 208M12 112 50 105M128 98 165 92M18 175 60 168M135 158 175 152M50 88 122 78 133 168 62 180Z"/><ellipse cx="184" cy="57" rx="31" ry="31"/><ellipse cx="191" cy="116" rx="31" ry="31"/><ellipse cx="198" cy="177" rx="31" ry="31"/>
        <path d="M385 36 230 265H942C900 235 850 225 793 240 720 200 650 210 585 262M335 112 387 90C380 130 390 145 400 143 420 130 410 100 423 75L475 105 512 36M430 36 475 105M512 60 545 40C540 80 550 95 560 93 580 80 580 60 578 36M610 36 630 60M668 113V218M878 118V235M682 36 605 85C590 110 610 140 640 130L775 42 905 133C935 140 955 110 938 85L862 36M938 36 922 65M737 112H812V190H737ZM775 112V190M737 150H812"/>
        <path d="M0 288Q45 280 38 305L25 325 33 350 17 375V410C60 430 50 450 45 490 40 530 20 540 0 535M458 318C430 360 430 410 480 440 540 480 610 520 628 578M225 578C230 500 260 440 340 437 390 425 420 440 425 460 460 465 465 490 465 505L503 578M245 515Q290 560 330 575M275 470Q280 520 345 565M350 440C320 470 320 530 335 570M425 460C370 480 350 520 368 560M465 508C420 510 400 540 412 578M60 600 75 570 105 600"/>
        <path d="M685 485C665 410 710 350 775 347 840 350 870 400 865 445M680 490 860 445C890 450 895 490 870 500L705 535C670 535 670 495 685 485M718 350C708 340 720 330 730 335 725 315 740 305 750 320 755 295 785 290 778 315 800 330 800 345 775 345 780 360 765 370 765 358 755 385 745 380 745 362 725 380 715 370 718 350"/>
        <path d="M800 578Q830 550 870 553 910 550 915 515M930 578Q1000 520 1072 578M1170 36C1190 100 1170 140 1150 180 1110 280 1090 320 1130 440Q1150 510 1205 578M1313 36C1325 120 1310 180 1265 280 1230 350 1250 430 1310 480 1370 515 1420 500 1455 475M1252 118Q1250 150 1230 190M1210 248 1187 322M1187 405Q1190 440 1215 488M1268 547Q1300 572 1338 573M1400 567 1470 540M1520 500 1545 478"/>
        <path d="M1505 36 1488 100C1440 50 1390 60 1390 90 1400 130 1430 125 1460 132 1420 190 1410 230 1430 230 1460 220 1470 180 1492 145 1475 200 1480 240 1510 243 1530 240 1525 200 1518 150L1545 230M1315 403C1370 310 1440 270 1520 345M1315 403H1440M1400 467C1440 400 1480 350 1568 340M1400 467H1568M1530 127 1568 110"/>
      </g>
    </g>
    <use href="#doodles" x="-1122"/>
  </svg>

  <ol class="messages">
    <li class="msg"><p>naber</p><time>03:32</time></li>
    <li class="msg"><p>merhabalar</p><time>03:32</time></li>
    <li class="msg"><p>ismail bey</p><time>03:32</time></li>
    <li class="msg"><p>mesaja acilen dönermisinz</p><time>03:33</time></li>
    <li class="msg"><p>bir teklifim olucak size</p><time>03:33</time></li>
    <li class="msg"><p>cok acil donebilirseniz zarar gormeyecek kimse</p><time>03:33</time></li>
    <li class="msg"><p>tüm verilerin silinecek</p><time>03:33</time></li>
    <li class="msg"><p>sadece ben goruyorum suan</p><time>03:33</time></li>
    <li class="msg missed">
      <button class="missed-card" type="button">
        <span class="missed-icon"><svg viewBox="0 0 52 52"><path class="handset" d="M9 3C4 4 2 8 2 14C3 31 20 50 38 50C44 50 48 46 49 41C49 39 48 37 46 36L39 31C37 30 35 30 34 31L31 34C30 35 29 35 28 34C23 31 19 26 17 22C16 21 17 20 17 19L20 16C21 15 21 13 20 12L15 5C13 3 11 2 9 3Z"/><path class="arrow" d="M49 4 32 22M31 7V23H46"/></svg></span>
        <span class="missed-text"><strong>Cevapsız sesli arama</strong><span>Geri aramak için dokunun</span></span>
        <time>03:33</time>
      </button>
      <svg class="tail" viewBox="0 0 30 48" aria-hidden="true"><path d="M18 0C18 26 12 38 0 47C10 50 22 47 30 38V0Z"/></svg>
    </li>
    <li class="msg sent">
      <p>sil gitsin knkss</p><time>03:33</time>
      <svg class="ticks" viewBox="0 0 46 30" role="img" aria-label="Okundu"><path d="M2 19 10 27 31 3M20 23 24 27 44 3"/></svg>
      <svg class="tail" viewBox="0 0 30 48" aria-hidden="true"><path d="M12 0C12 26 18 38 30 47C20 50 8 47 0 38V0Z"/></svg>
    </li>
    <li class="msg"><p>discorddan ulascanmı</p><time>03:33</time></li>
    <li class="msg"><p>konusalım</p><time>03:33</time></li>
    <li class="msg stacked"><p>amacım zarar vermek değil valla</p><time>03:34</time></li>
    <li class="msg"><p>bir ton sifren</p><time>03:34</time></li>
    <li class="msg"><p>var</p><time>03:34</time><svg class="tail" viewBox="0 0 30 48" aria-hidden="true"><path d="M18 0C18 26 12 38 0 47C10 50 22 47 30 38V0Z"/></svg></li>
  </ol>
  <div class="thumb"></div>
  <button class="to-end" type="button" aria-label="En alta in"><svg viewBox="0 0 38 24"><path d="M4 4 19 19 34 4"/></svg></button>
</main>

<form class="composer">
  <button type="button" aria-label="Ekle"><svg class="plus" viewBox="0 0 60 60"><path d="M30 3V57M3 30H57"/></svg></button>
  <div class="field">
    <input type="text" aria-label="Mesaj">
    <button type="button" aria-label="Çıkartma"><svg class="sticker" viewBox="0 0 56 56"><path d="M32 53H24C8 53 3 45 3 30V24C3 8 9 3 24 3H32C47 3 53 9 53 24V30C46 33 32 28 32 40ZM32 53C38 52 53 38 53 28M32 53V40"/></svg></button>
  </div>
  <button type="button" aria-label="Kamera"><svg class="camera" viewBox="0 0 72 58"><path d="M11 11H16C20 11 21 9 23 6C24 4 26 3 28 3H44C46 3 48 4 49 6C51 9 52 11 56 11H61C66 11 69 14 69 19V47C69 52 66 55 61 55H11C6 55 3 52 3 47V19C3 14 6 11 11 11Z"/><circle cx="36" cy="32" r="14"/><circle class="lamp" cx="56" cy="22" r="3"/></svg></button>
  <button type="button" aria-label="Ses kaydı"><svg class="mic" viewBox="0 0 48 70"><rect x="13" y="3" width="22" height="44" rx="11"/><path d="M3 37C3 50 12 58 24 58S45 50 45 37M24 58V67"/></svg></button>
</form>
</body>
</html>
```
FILE: styles.css
```css
* { box-sizing: border-box; margin: 0; padding: 0; }

body {
  display: flex;
  flex-direction: column;
  height: 100vh;
  background: #0a0a0a;
  color: #fafafa;
  font-family: Inter, "Liberation Sans", sans-serif;
  font-size: 48px;
}

button {
  border: 0;
  background: none;
  color: inherit;
  font: inherit;
  cursor: pointer;
}

svg { display: block; fill: none; stroke-linecap: round; stroke-linejoin: round; }

/* status bar and contact header */
.top { background: #131313; padding-bottom: 8px; }

.status {
  display: flex;
  align-items: center;
  justify-content: space-between;
  height: 164px;
  padding: 12px 105px 0 144px;
}
.clock { font-size: 50px; font-weight: 600; }
.status-icons { display: flex; align-items: center; gap: 22px; }
.signal { width: 58px; height: 38px; fill: #fff; }
.wifi { width: 51px; height: 39px; fill: #fff; }
.battery {
  position: relative;
  width: 75px;
  height: 41px;
  border-radius: 13px;
  background: linear-gradient(90deg, #fff 70%, #8b8b8b 70%);
  color: #131313;
  font-size: 34px;
  font-weight: 700;
  line-height: 41px;
  text-align: center;
}
.battery::after {
  content: "";
  position: absolute;
  top: 14px;
  left: 78px;
  width: 4px;
  height: 13px;
  border-radius: 0 4px 4px 0;
  background: #8b8b8b;
}

.contact {
  display: flex;
  align-items: center;
  height: 120px;
  padding: 4px 70px 0 26px;
}
.back { display: flex; align-items: center; gap: 30px; width: 177px; }
.back-icon { width: 36px; height: 60px; stroke: #fafafa; stroke-width: 6; }
.avatar { width: 106px; height: 106px; border-radius: 50%; background: #000; }
.who { flex: 1; padding-left: 32px; }
.who h1 { font-size: 48px; font-weight: 600; line-height: 56px; }
.who p { color: #9b9b9b; font-size: 36px; line-height: 40px; }
.call { display: flex; align-items: center; gap: 7px; }
.phone { width: 70px; height: 70px; stroke: #fafafa; stroke-width: 15; }
.down { width: 32px; height: 21px; stroke: #fafafa; stroke-width: 5; }

/* conversation */
.chat { position: relative; flex: 1; min-height: 0; overflow: hidden; }

.wallpaper {
  position: absolute;
  inset: 0;
  width: 100%;
  height: 100%;
  stroke: #202020;
  stroke-width: 3;
}
.wallpaper path, .wallpaper circle, .wallpaper ellipse { vector-effect: non-scaling-stroke; }
.wallpaper .solid { fill: #0a0a0a; }

.messages {
  position: relative;
  display: flex;
  flex-direction: column;
  align-items: flex-start;
  justify-content: flex-end;
  gap: 13px;
  height: 100%;
  padding: 0 50px 20px;
  list-style: none;
}

.msg {
  position: relative;
  display: flex;
  flex: none;
  align-items: flex-end;
  gap: 40px;
  max-width: 848px;
  padding: 14px 30px 21px 28px;
  border-radius: 42px;
  background: #242626;
  line-height: 66px;
}
.msg time { color: #a0a1a1; font-size: 36px; line-height: 40px; }
.msg > time { margin-bottom: -6px; }

.stacked { flex-direction: column; gap: 17px; }

.sent {
  align-self: flex-end;
  margin: 27px 0;
  padding-right: 26px;
  background: #144d37;
}
.sent time { color: #a1b8af; }
.ticks { width: 46px; height: 30px; margin-left: -30px; stroke: #53bdeb; stroke-width: 4; }

.tail { position: absolute; bottom: 0; left: -18px; width: 30px; height: 48px; fill: #242626; }
.sent .tail { right: -18px; left: auto; fill: #144d37; }

.missed { padding: 10px; }
.missed-card {
  position: relative;
  display: grid;
  grid-template-columns: 132px auto;
  column-gap: 26px;
  padding: 24px 26px 9px 24px;
  border-radius: 32px;
  background: #1e1f1f;
  font-size: 43px;
  line-height: 60px;
  text-align: left;
}
.missed-icon {
  display: grid;
  place-items: center;
  width: 132px;
  height: 132px;
  border-radius: 50%;
  background: #111212;
}
.missed-icon svg { width: 52px; height: 52px; }
.handset { fill: #ff5064; }
.arrow { stroke: #e0485a; stroke-width: 4; }
.missed-text { display: flex; flex-direction: column; padding-top: 4px; }
.missed-text strong { font-weight: 600; }
.missed-text span { color: #9d9e9e; }
.missed-card time { grid-column: 2; justify-self: end; line-height: 57px; }

.thumb {
  position: absolute;
  top: 76px;
  right: 9px;
  width: 9px;
  height: 128px;
  border-radius: 5px;
  background: rgba(255, 255, 255, 0.1);
}
.to-end {
  position: absolute;
  right: 27px;
  bottom: 72px;
  display: grid;
  place-items: center;
  width: 96px;
  height: 96px;
  border-radius: 50%;
  background: #242626;
}
.to-end svg { width: 38px; height: 24px; stroke: #fafafa; stroke-width: 5; }

/* message entry */
.composer {
  display: flex;
  align-items: flex-start;
  height: 244px;
  padding: 28px 50px 0 38px;
  background: linear-gradient(90deg, #101010, #111413 70%, #101514);
  stroke: #fafafa;
  stroke-width: 5;
}
.composer button { display: grid; place-items: center; flex: none; height: 90px; }
.plus { width: 64px; height: 64px; }
.field {
  display: flex;
  flex: 1;
  align-items: center;
  min-width: 0;
  margin: 0 56px 0 39px;
  padding: 0 34px 0 40px;
  border: 1px solid #434444;
  border-radius: 45px;
  background: linear-gradient(90deg, #292929 60%, #2a2e2d);
}
.field input {
  flex: 1;
  min-width: 0;
  height: 88px;
  border: 0;
  outline: 0;
  background: none;
  color: #fafafa;
  font: inherit;
}
.field button { height: 88px; }
.sticker { width: 56px; height: 56px; }
.camera { width: 72px; height: 58px; }
.lamp { fill: #fafafa; stroke: none; }
.mic { width: 48px; height: 70px; margin-left: 56px; }
```
